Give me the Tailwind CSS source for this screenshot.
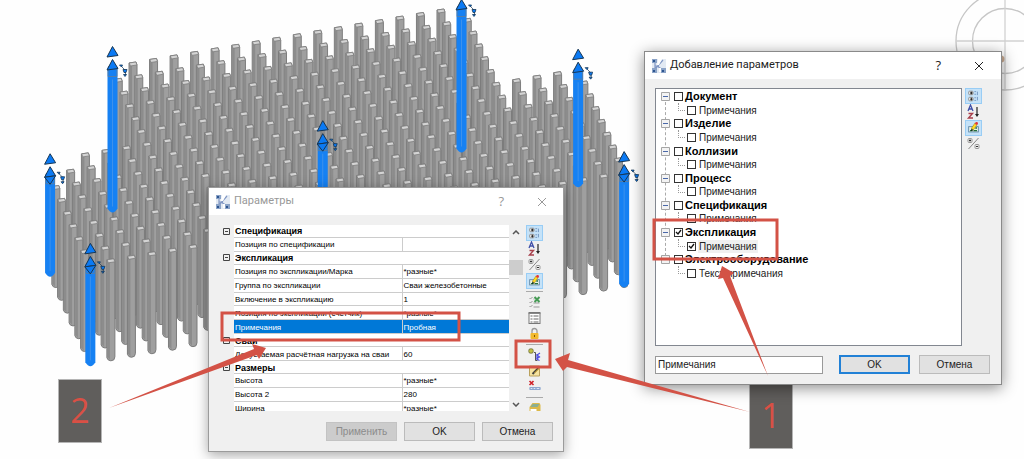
<!DOCTYPE html>
<html lang="ru">
<head>
    <meta charset="UTF-8">
    <meta name="viewport" content="width=device-width, initial-scale=1.0">
    <title>Добавление параметров</title>
    <script src="https://cdn.jsdelivr.net/npm/@tailwindcss/browser@4"></script>
</head>
<body class="relative min-h-screen overflow-hidden bg-[#fefefe] font-['Liberation_Sans',sans-serif] text-[#222]">

    <!-- Icons shared by both windows -->
    <svg class="hidden">
        <symbol id="i-app" viewBox="0 0 14 14">
            <path d="M0 0h14v14H0z" fill="#e3eaf3"/>
            <path d="M3 3v8M3 10l8-9M5 7l6 4M3 7h4" stroke="#8197c4" stroke-width="1.2" fill="none"/>
            <path d="M0 0h5v4H0zM0 9h5v5H0zM9 9h5v5H9z" fill="#8ba3c7"/>
            <path d="M1 1h2v2H1zM1 11h2v2H1zM10 11h2v2h-2z" fill="#2d5590"/>
            <path d="M6 0h4L7 6H5zM7 9h2v4H7z" fill="#fff"/>
        </symbol>
        <symbol id="i-cat" viewBox="0 0 16 16">
            <rect x="2.500" y="2.500" width="5" height="4" rx="1" fill="#eee" stroke="#888"/>
            <rect x="2.500" y="9.500" width="5" height="4" rx="1" fill="#eee" stroke="#888"/>
            <path d="M4 4h3v1H4zM5 3h1v3H5zM4 11h3v1H4zM5 10h1v3H5z" fill="#111"/>
            <path d="M9 3h2M9 6h2M9 10h2M9 13h2M12.500 3v4M12.500 9v4" stroke="#6d91bd"/>
        </symbol>
        <symbol id="i-az" viewBox="0 0 16 16">
            <path d="M2.500 7L5 1l2.500 6M3.500 5h3" stroke="#3f50a8" stroke-width="1.300" fill="none"/>
            <path d="M3 9.500h4L3 14h4.500" stroke="#a8404c" stroke-width="1.400" fill="none"/>
            <path d="M11.500 3v8" stroke="#222" stroke-width="1.200"/>
            <path d="M9.500 10h4l-2 3z" fill="#222"/>
        </symbol>
        <symbol id="i-pm" viewBox="0 0 16 16">
            <path d="M13 2L3 13" stroke="#888"/>
            <rect x="2.500" y="2.500" width="4" height="4" rx="1" fill="#eee" stroke="#999"/>
            <rect x="9.500" y="8.500" width="4" height="4" rx="1" fill="#eee" stroke="#999"/>
            <path d="M3.500 4.500h2M4.500 3.500v2M10.500 10.500h2" stroke="#333"/>
        </symbol>
        <symbol id="i-edit" viewBox="0 0 16 16">
            <rect x="2.500" y="6.500" width="11" height="6" fill="#e9f2e7" stroke="#5b82a2"/>
            <path d="M4 11h2v-2M8 11h4M10 8h2" stroke="#25703c" stroke-width="1.500" fill="none"/>
            <path d="M6.500 9.500L11 3" stroke="#a5882c" stroke-width="3.500"/>
            <path d="M7 9L11 3" stroke="#ffdc22" stroke-width="2.400"/>
            <circle cx="11.500" cy="2.800" r="1.600" fill="#e2343b"/>
            <path d="M5.500 11l1.500-1" stroke="#111" stroke-width="1.300"/>
        </symbol>
        <symbol id="i-check" viewBox="0 0 16 16">
            <path d="M3 4l1 1 2-2M3 8l1 1 2-2M3 12l1 1 2-2M7 9h6M7 13h6M7 5h1" stroke="#999" fill="none"/>
            <path d="M8 3l5 5M13 3L8 8" stroke="#469b55" stroke-width="2"/>
        </symbol>
        <symbol id="i-list" viewBox="0 0 16 16">
            <rect x="2.500" y="2.500" width="11" height="11" fill="#fff" stroke="#777"/>
            <path d="M2 3.500h12" stroke="#888"/>
            <path d="M4 6h2M4 9h2M4 12h2M7 6h5M7 9h5M7 12h5" stroke="#666"/>
        </symbol>
        <symbol id="i-lock" viewBox="0 0 16 16">
            <path d="M5.500 8V5a2 2 0 0 1 5 0v3" fill="none" stroke="#999" stroke-width="1.300"/>
            <rect x="4" y="7" width="8" height="6" rx="1" fill="#f2b92e"/>
            <path d="M8 9v2" stroke="#805508"/>
        </symbol>
        <symbol id="i-add" viewBox="0 0 16 16">
            <path d="M4.500 1.500v5M2 4h5" stroke="#67671d" stroke-width="3"/>
            <path d="M4.500 2v4M2.500 4h4" stroke="#c9c84a" stroke-width="1.400"/>
            <path d="M7.500 5.500h1.500v8h2" stroke="#555" fill="none"/>
            <path d="M13.500 6l-3 2 2.500 2-3 2 3 1.500M10.500 7v6" stroke="#4c4ce3" stroke-width="1.200" fill="none"/>
        </symbol>
        <symbol id="i-note" viewBox="0 0 16 16">
            <path d="M3 3h10v10H3z" fill="#f5e3a0" stroke="#baa15d"/>
            <path d="M6 11l6-6" stroke="#42403c" stroke-width="2"/>
            <path d="M8 10l5-5" stroke="#e8b92f"/>
        </symbol>
        <symbol id="i-del" viewBox="0 0 16 16">
            <path d="M3 2l4 4M7 2L3 6" stroke="#cf2028" stroke-width="1.600"/>
            <path d="M3 9.500h11" stroke="#6c8fc4" stroke-width="2.500"/>
            <path d="M4 9.500h2M7 9.500h2M10 9.500h3" stroke="#dbe7f7"/>
        </symbol>
        <symbol id="i-db" viewBox="0 0 16 16">
            <path d="M3 7l3-4h7l1 2v6l-3 2H3z" fill="#dcb949"/>
            <path d="M6 4h7l-2 3H4z" fill="#8caf91"/>
            <path d="M4 9h6v2H4z" fill="#fff"/>
        </symbol>
    </svg>

    <!-- Model view -->
    <svg class="absolute left-0 top-0 h-[459px] w-[1024px]" viewBox="0 0 1024 459">
        <g fill="none" stroke="#c6c6c6" stroke-width="1.300">
            <circle cx="1005" cy="41" r="49"/>
            <circle cx="1005" cy="41" r="32.500"/>
            <path d="M956 41h68M1005 0v90" stroke="#d2d2d2"/>
        </g>
        <circle cx="1001" cy="59" r="3.500" fill="#c9aa91"/>
        <g id="piles"></g>
        <g id="selected"></g>
    </svg>

    <!-- Step labels -->
    <div class="absolute left-[58px] top-[379px] flex h-[64px] w-[44px] items-center justify-center border border-[#b5b5b5] bg-[#605e5c] pb-[2px] font-['Open_Sans',sans-serif] text-[34px] leading-none text-[#d95045]">2</div>
    <div class="absolute left-[749px] top-[384px] flex h-[65px] w-[44px] items-center justify-center border border-[#b5b5b5] bg-[#605e5c] pb-[4px] font-['Open_Sans',sans-serif] text-[34px] leading-none text-[#d95045]">1</div>

    <!-- Parameters window -->
    <section class="absolute left-[208px] top-[187px] w-[356px] border border-[#9b9b9b] bg-[#f0f0f0] shadow-[0_3px_12px_rgba(0,0,0,0.35)]">
        <header class="flex h-[27px] items-center bg-white pl-[7px] pr-[16px] text-[#999]">
            <svg class="size-[14px]"><use href="#i-app"/></svg>
            <h2 class="ml-[4px] font-[Roboto,sans-serif] text-[11px]">Параметры</h2>
            <button class="ml-auto font-['Open_Sans',sans-serif] text-[13px]" aria-label="Справка">?</button>
            <button class="ml-[33px]" aria-label="Закрыть"><svg class="size-[10px]" viewBox="0 0 10 10"><path d="M1 1l8 8M9 1L1 9" stroke="#999"/></svg></button>
        </header>
        <div class="mt-[10px] flex h-[186px] overflow-hidden pl-[13px] pr-[20px]">
            <div class="min-w-0 flex-1">
                <table class="h-[191px] w-full table-fixed border-collapse text-[8px] leading-[10px] text-black">
                    <colgroup><col class="w-[12px]"><col class="w-[168px]"><col></colgroup>
                    <tbody id="props"></tbody>
                </table>
            </div>
            <div class="flex w-[14px] flex-col items-center pb-[4px] pt-[5px]">
                <svg class="h-[5px] w-[8px]" viewBox="0 0 8 5"><path d="M1 4l3-3 3 3" fill="none" stroke="#555" stroke-width="1.500"/></svg>
                <span class="mt-[25px] h-[15px] w-[14px] bg-[#cdcdcd]"></span>
                <svg class="mt-auto h-[5px] w-[8px]" viewBox="0 0 8 5"><path d="M1 1l3 3 3-3" fill="none" stroke="#555" stroke-width="1.500"/></svg>
            </div>
            <div class="ml-[3px] w-[17px]">
                <button class="block border border-[#99cdf5] bg-[#c5e2f8]" aria-label="По категориям"><svg class="h-[14px] w-[15px]"><use href="#i-cat"/></svg></button>
                <button class="block" aria-label="По алфавиту"><svg class="h-[16px] w-[17px]"><use href="#i-az"/></svg></button>
                <button class="block" aria-label="Свернуть"><svg class="h-[16px] w-[17px]"><use href="#i-pm"/></svg></button>
                <button class="block border border-[#99cdf5] bg-[#c5e2f8]" aria-label="Правка"><svg class="h-[14px] w-[15px]"><use href="#i-edit"/></svg></button>
                <hr class="my-[2px] border-[#aaa]">
                <button class="block" aria-label="Проверка"><svg class="h-[16px] w-[17px]"><use href="#i-check"/></svg></button>
                <button class="block" aria-label="Список"><svg class="h-[16px] w-[17px]"><use href="#i-list"/></svg></button>
                <button class="block" aria-label="Блокировка"><svg class="h-[16px] w-[17px]"><use href="#i-lock"/></svg></button>
                <hr class="my-[2px] border-[#aaa]">
                <button class="block" aria-label="Добавить параметр"><svg class="h-[16px] w-[17px]"><use href="#i-add"/></svg></button>
                <button class="block" aria-label="Изменить параметр"><svg class="h-[16px] w-[17px]"><use href="#i-note"/></svg></button>
                <button class="block" aria-label="Удалить параметр"><svg class="h-[16px] w-[17px]"><use href="#i-del"/></svg></button>
                <hr class="my-[2px] border-[#aaa]">
                <button class="block" aria-label="База"><svg class="h-[16px] w-[17px]"><use href="#i-db"/></svg></button>
            </div>
        </div>
        <footer class="flex justify-end gap-[7px] pb-[10px] pr-[10px] pt-[11px] text-[10px]">
            <button class="h-[19px] w-[71px] border border-[#c3c3c3] bg-[#cccccc] text-[#8b8b8b]" disabled>Применить</button>
            <button class="h-[19px] w-[71px] border border-[#bbb] bg-[#e1e1e1]">OK</button>
            <button class="h-[19px] w-[71px] border border-[#bbb] bg-[#e1e1e1]">Отмена</button>
        </footer>
    </section>

    <!-- Add parameters window -->
    <section class="absolute left-[644px] top-[51px] w-[358px] border border-[#8a8a8a] bg-[#f0f0f0] shadow-[0_3px_14px_rgba(0,0,0,0.45)]">
        <header class="flex h-[27px] items-center bg-white pl-[7px] pr-[17px]">
            <svg class="size-[14px]"><use href="#i-app"/></svg>
            <h2 class="ml-[4px] font-[Roboto,sans-serif] text-[11px]">Добавление параметров</h2>
            <button class="ml-auto font-['Open_Sans',sans-serif] text-[13px]" aria-label="Справка">?</button>
            <button class="ml-[33px]" aria-label="Закрыть"><svg class="size-[10px]" viewBox="0 0 10 10"><path d="M1 1l8 8M9 1L1 9" stroke="#222"/></svg></button>
        </header>
        <div class="mt-[9px] flex pl-[10px] pr-[19px]">
            <div class="relative h-[258px] flex-1 border border-[#828790] bg-white">
                <span class="absolute left-[9px] top-[8px] h-[164px] border-l border-dashed border-[#aaa]"></span>
                <ul id="tree" class="relative grid h-[190px] grid-rows-14 pl-[5px] text-[10px] leading-[13px]"></ul>
            </div>
            <div class="ml-[3px] w-[17px]">
                <button class="block border border-[#99cdf5] bg-[#c5e2f8]" aria-label="По категориям"><svg class="h-[14px] w-[15px]"><use href="#i-cat"/></svg></button>
                <button class="block" aria-label="По алфавиту"><svg class="h-[16px] w-[17px]"><use href="#i-az"/></svg></button>
                <button class="block border border-[#99cdf5] bg-[#c5e2f8]" aria-label="Правка"><svg class="h-[14px] w-[15px]"><use href="#i-edit"/></svg></button>
                <button class="block" aria-label="Свернуть"><svg class="h-[16px] w-[17px]"><use href="#i-pm"/></svg></button>
            </div>
        </div>
        <footer class="flex items-center pb-[10px] pl-[10px] pr-[11px] pt-[9px] text-[10px]">
            <input type="text" value="Примечания" aria-label="Имя параметра" class="h-[18px] min-w-0 flex-1 border border-[#999] bg-white pl-[2px] outline-none">
            <button class="ml-[16px] h-[19px] w-[71px] border-2 border-[#2281d6] bg-[#e1e1e1]">OK</button>
            <button class="ml-[9px] h-[19px] w-[71px] border border-[#bbb] bg-[#e1e1e1]">Отмена</button>
        </footer>
    </section>

    <!-- Callouts -->
    <svg class="pointer-events-none absolute left-0 top-0 h-[459px] w-[1024px]" viewBox="0 0 1024 459">
        <g fill="none" stroke="#d35246" stroke-width="3">
            <rect x="222" y="313" width="237" height="27"/>
            <rect x="516" y="341" width="34" height="26"/>
            <rect x="654" y="220" width="123" height="39"/>
        </g>
        <g fill="#d35246">
            <path d="M109 408L254 349L252 344L266 348L259 359L257 355Z"/>
            <path d="M768 376L723 278L718 279L722 266L734 273L730 276Z"/>
            <path d="M750 412L567 367L563 371L555 359L570 353L568 360Z"/>
        </g>
    </svg>

    <script>
        // Pile field: (i, j) grid drawn in projection
        const px = (i, j) => 112.5 + i * 20.53 + j * 5.75;
        const py = (i, j) => 67.5 - i * 3.53 + j * 12.8;
        const firstRow = i => i < -3 ? 7 : i < 0 || i > 17 ? 6 : 0;

        let piles = "";
        for (let j = 0; j <= 14; j++) {
            for (let i = -5; i <= 21; i++) {
                if (j < firstRow(i)) continue;
                const x = px(i, j), y = py(i, j), h = i > 13 ? 115 : 100;
                piles += `<g transform="translate(${x} ${y})">
                    <path d="M-4 -1V${h - 3}Q-3 ${h} 0 ${h}Q4 ${h} 4 ${h - 4}V1L3 -2Z" fill="#9f9f9f" stroke="#7c7c7c"/>
                    <path d="M-3.500 1L-1 2V${h - 1}L-3.500 ${h - 4}Z" fill="#8c8c8c"/>
                    <path d="M-3.800 -1L2.800 -2L4 1L-2.600 2Z" fill="#d4d4d4" stroke="#7e7e7e" stroke-width=".8"/></g>`;
            }
        }
        document.getElementById("piles").innerHTML = piles;

        // Selected piles with their grips: i, j, height, lower grip shown
        const picked = [[0, 0, 145, 0], [17, 0, 145, 0], [21, 6, 117, 0], [-5, 7, 102, 1], [-5, 14, 102, 1], [8, 8, 102, 1], [21, 14, 115, 1]];
        document.getElementById("selected").innerHTML = picked.map(([i, j, h, low]) =>
            `<g transform="translate(${px(i, j)} ${py(i, j)})">
                <path d="M-5 0V${h - 4}Q0 ${h + 4} 5 ${h - 4}V0Z" fill="#1681f3"/>
                <path d="M0 12V${h - 6}" stroke="#3d91ec"/>
                <path d="M-4.500 1H4.500V9H-4.500Z" fill="none" stroke="#657e96" stroke-width=".8"/>
                <g fill="#0b7af4" stroke="#173653" stroke-width="1">
                    <path d="M0 -21L5.500 -12L-5.500 -10.500Z"/>
                    <path d="M0 -8L5.500 1L-5.500 2.500Z"/>
                    ${low ? '<path d="M-5.500 2.500L5.500 1L0 9.500Z"/>' : ''}
                    <path d="M9 -1l4 4v5" fill="none" stroke-width=".7"/>
                    <path d="M7 -2.500l3 0 -1 2ZM10.500 2l4 0 -1 3 -2 0ZM11 7h3l-1.500 2Z" stroke-width=".8"/>
                </g></g>`).join("");

        // Property grid
        const rows = [
            ["Спецификация"], ["Позиция по спецификации", ""],
            ["Экспликация"], ["Позиция по экспликации/Марка", "*разные*"],
            ["Группа по экспликации", "Сваи железобетонные"], ["Включение в экспликацию", "1"],
            ["Позиция по экспликации (счетчик)", "*разные*"], ["Примечания", "Пробная"],
            ["Сваи"], ["Допускаемая расчётная нагрузка на сваи", "60"],
            ["Размеры"], ["Высота", "*разные*"], ["Высота 2", "280"], ["Ширина", "*разные*"],
        ];
        const minus = `<svg class="size-[7px]" viewBox="0 0 7 7"><path d="M.5.5h6v6h-6zM2 3.500h3" fill="none" stroke="#444"/></svg>`;
        document.getElementById("props").innerHTML = rows.map(([name, value]) => {
            if (value === undefined) {
                return `<tr><td class="p-0 pl-px">${minus}</td><th colspan="2" class="border-b border-[#ccc] bg-white p-0 pl-px pt-px text-left text-[9px] font-bold text-black">${name}</th></tr>`;
            }
            const look = name === "Примечания" ? "bg-[#0078d7] text-white" : "bg-white";
            return `<tr><td class="p-0"></td><td class="border-b border-r border-[#ccc] p-0 pl-px pt-[2px] whitespace-nowrap ${look}">${name}</td><td class="border-b border-[#ccc] p-0 pl-px pt-[2px] whitespace-nowrap ${look}">${value}</td></tr>`;
        }).join("");

        // Category tree
        const groups = ["Документ", "Изделие", "Коллизии", "Процесс", "Спецификация", "Экспликация", "Электрооборудование"];
        const box = on => `<input type="checkbox" ${on ? "checked" : ""} class="peer size-[9px] shrink-0 appearance-none border border-[#333] bg-white"><svg class="pointer-events-none -ml-[9px] invisible size-[9px] shrink-0 peer-checked:visible" viewBox="0 0 9 9"><path d="M2 4l2 2 3-4" fill="none" stroke="#111" stroke-width="1.300"/></svg>`;
        document.getElementById("tree").innerHTML = groups.map((g, n) => `
            <li class="flex items-center pt-[2px]"><svg class="mr-[4px] size-[9px] shrink-0" viewBox="0 0 9 9"><path d="M.5.5h8v8h-8z" fill="#f3f3f3" stroke="#a5a5a5"/><path d="M2 4.500h5" stroke="#4a68a8"/></svg>
                <label class="flex items-center text-[11px] font-bold text-black">${box(n === 5)}<span class="ml-[2px]">${g}</span></label></li>
            <li class="flex items-center pl-[17px] pt-[2px]"><span class="-mt-[6px] mr-[2px] h-[8px] w-[7px] border-b border-l border-dotted border-[#999]"></span>
                <label class="flex items-center">${box(n === 5)}<span class="ml-[2px] px-px ${n === 5 ? "bg-[#f0f0f0]" : ""}">${n === 6 ? "Текст примечания" : "Примечания"}</span></label></li>`).join("");
    </script>
</body>
</html>
